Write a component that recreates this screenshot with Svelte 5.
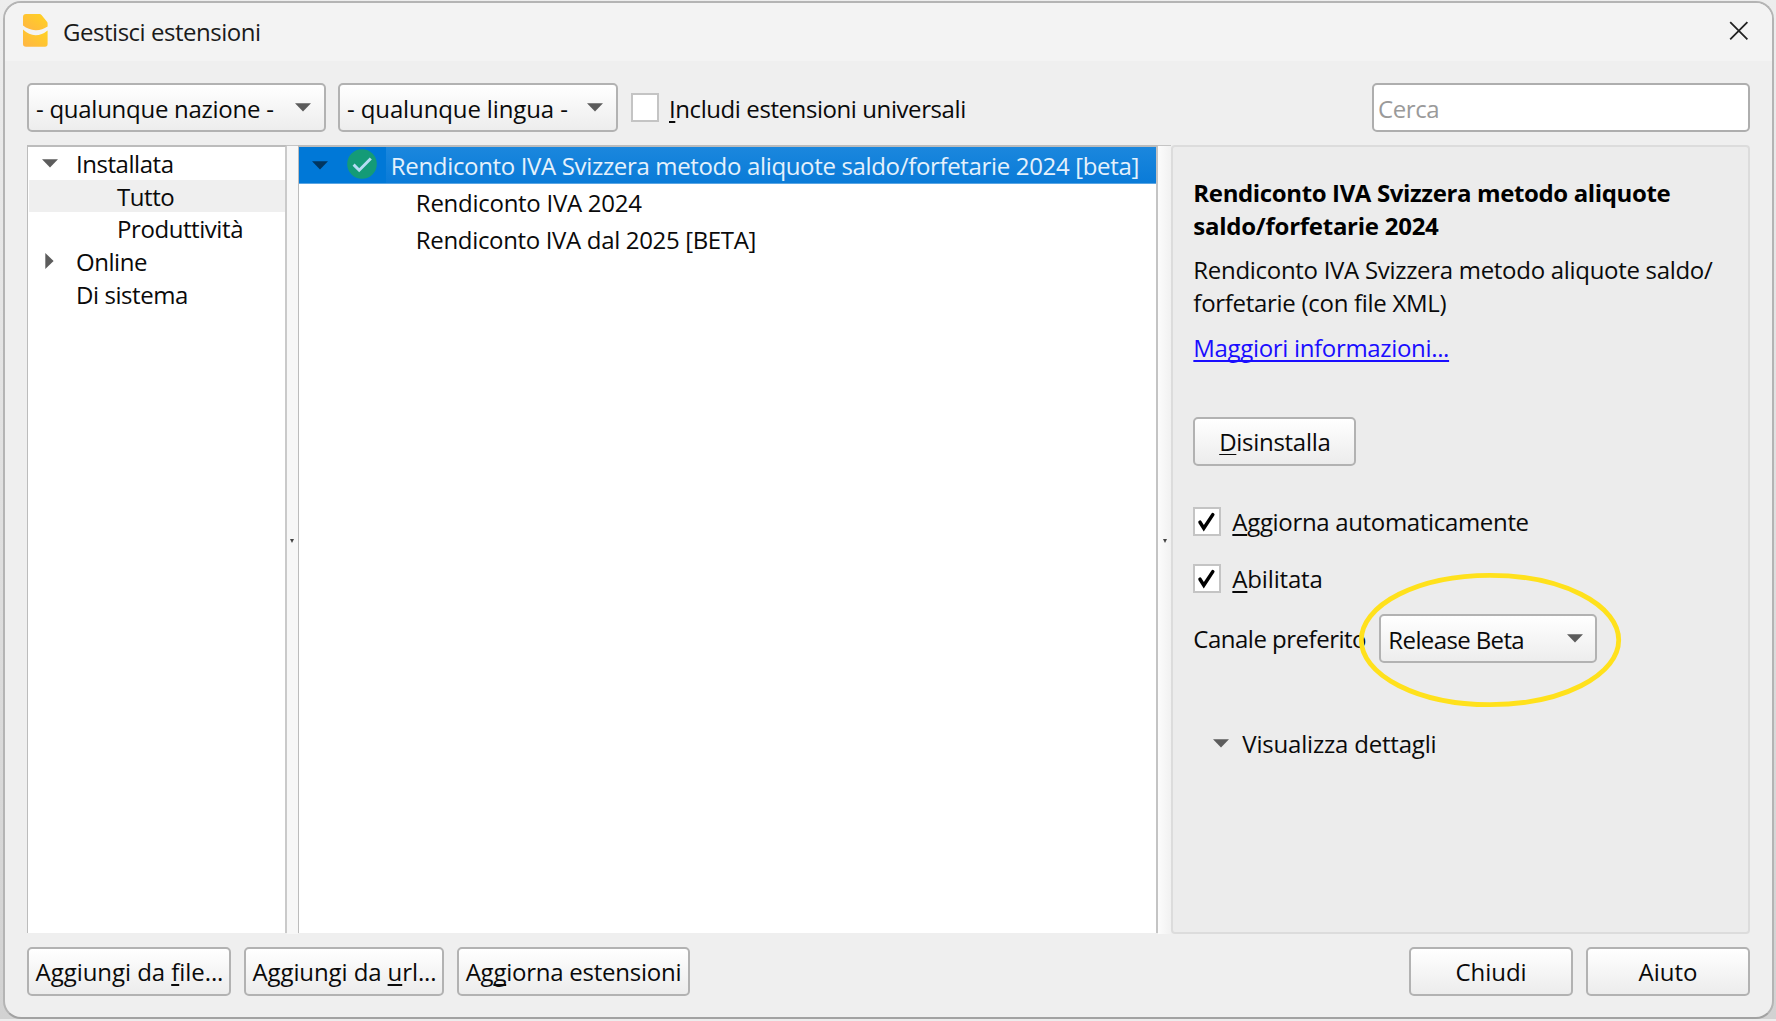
<script>
  const stores = [
    { label: 'Installata', arrow: 'down', cls: 't-inst' },
    { label: 'Tutto', child: true, active: true, cls: 't-tutto' },
    { label: 'Produttività', child: true, cls: 't-prod' },
    { label: 'Online', arrow: 'right', cls: 't-online' },
    { label: 'Di sistema', cls: 't-sist' },
  ];
</script>

{#snippet down()}
  <svg class="arrow" width="16" height="9" viewBox="0 0 16 9"><path d="M0 .3H16L8 8.6Z" /></svg>
{/snippet}

{#snippet tick()}
  <span class="box">
    <svg width="28" height="29" viewBox="0 0 28 29"><path d="M7 15.2L10.8 21.2L19.8 7.6" fill="none" stroke="#000" stroke-width="3.5" stroke-linecap="round" stroke-linejoin="miter" /></svg>
  </span>
{/snippet}

<div class="window">
  <header>
    <svg class="logo" width="25" height="33" viewBox="0 0 25 33">
      <defs>
        <linearGradient id="lg" x1="0" y1="1" x2="1" y2="0">
          <stop offset="0" stop-color="#ffb545" /><stop offset="1" stop-color="#ffd31f" />
        </linearGradient>
      </defs>
      <path fill="url(#lg)" d="M3 0H16.5Q17.6 0 18.5 .9L24 7.8Q24.6 8.6 24.6 9.6V12.6Q19 16.4 12.5 16.2Q5.5 16 0 11.6V3Q0 0 3 0Z" />
      <path fill="url(#lg)" d="M0 15.5Q6 21.2 12.5 21.2Q19 21.2 24.6 16.5V30Q24.6 32.7 22 32.7H3Q0 32.7 0 30Z" />
    </svg>
    <h1>Gestisci estensioni</h1>
    <svg class="close" width="20" height="20" viewBox="0 0 20 20"><path d="M1.2 1.2L18.4 18.4M18.4 1.2L1.2 18.4" stroke="#222" stroke-width="1.8" fill="none" /></svg>
  </header>

  <div class="toolbar">
    <div class="combo nation"><span class="t-naz">- qualunque nazione -</span>{@render down()}</div>
    <div class="combo lang"><span class="t-lin">- qualunque lingua -</span>{@render down()}</div>
    <span class="box"></span>
    <span class="t-incl"><u>I</u>ncludi estensioni universali</span>
    <input class="search" placeholder="Cerca" />
  </div>

  <main>
    <nav>
      {#each stores as s}
        <div class="node" class:child={s.child} class:active={s.active}>
          <span class="twist">
            {#if s.arrow === 'down'}{@render down()}{/if}
            {#if s.arrow === 'right'}
              <svg class="arrow" width="9" height="16" viewBox="0 0 9 16"><path d="M.3 0V16L8.6 8Z" /></svg>
            {/if}
          </span>
          <span class={s.cls}>{s.label}</span>
        </div>
      {/each}
    </nav>
    <div class="split"><i></i></div>
    <section class="list">
      <div class="selected">
        <span class="lead">
          {@render down()}
          <svg class="ok" width="30" height="30" viewBox="0 0 30 30"><circle cx="15" cy="15" r="14.8" fill="#149b77" /><path d="M6.6 15.6L12.2 21.2L23.8 9.4" fill="none" stroke="#b5dcf5" stroke-width="2.9" /></svg>
        </span>
        <span class="name t-long">Rendiconto IVA Svizzera metodo aliquote saldo/forfetarie 2024 [beta]</span>
      </div>
      <div class="sub t-2024">Rendiconto IVA 2024</div>
      <div class="sub t-2025">Rendiconto IVA dal 2025 [BETA]</div>
    </section>
    <div class="split wide"><i></i></div>
    <aside>
      <h2><span class="t-b1">Rendiconto IVA Svizzera metodo aliquote</span><br /><span class="t-b2">saldo/forfetarie 2024</span></h2>
      <p><span class="t-d1">Rendiconto IVA Svizzera metodo aliquote saldo/</span><br /><span>forfetarie (con file XML)</span></p>
      <a class="t-more" href="#info">Maggiori informazioni...</a>
      <button class="uninstall t-dis"><span><u class="thin">D</u>isinstalla</span></button>
      <div class="check">{@render tick()}<span class="t-auto"><u>A</u>ggiorna automaticamente</span></div>
      <div class="check second">{@render tick()}<span class="t-abil"><u>A</u>bilitata</span></div>
      <div class="channel">
        <span class="t-can">Canale preferito</span>
        <div class="combo release">
          <span class="t-rel">Release Beta</span>{@render down()}
          <svg class="ring" width="264" height="136" viewBox="0 0 264 136"><ellipse cx="132" cy="68" rx="128.7" ry="64.7" fill="none" stroke="#ffe11c" stroke-width="4.8" /></svg>
        </div>
      </div>
      <div class="details">{@render down()}<span class="t-vis">Visualizza dettagli</span></div>
    </aside>
  </main>

  <footer>
    <button class="w1 t-file"><span>Aggiungi da <u>f</u>ile...</span></button>
    <button class="w2 t-url"><span>Aggiungi da <u>u</u>rl...</span></button>
    <button class="w3 t-upd"><span>Ag<u>g</u>iorna estensioni</span></button>
    <button class="w4 end t-chi"><span>Chiudi</span></button>
    <button class="w4 t-aiu"><span>Aiuto</span></button>
  </footer>
</div>

<style>
  :global(body) { background: linear-gradient(#ededed, #d2d2d2); overflow: hidden; }
  * { box-sizing: border-box; }
  .window {
    width: 1771px; height: 1018px; margin: 1px 0 0 3px;
    display: flex; flex-direction: column;
    border: 2px solid #b4b4b4; border-bottom-color: #a2a2a2; border-radius: 18px;
    background: #efefef; overflow: hidden;
    font: 24px/33px "Open Sans", "Noto Sans", sans-serif;
    letter-spacing: -0.29px; color: #0a0a0a; white-space: nowrap;
  }
  header { display: flex; height: 58px; flex: none; background: #f3f3f3; padding: 11px 23px 0 18px; }
  h1 { font: inherit; margin: 1px 0 0 15px; letter-spacing: -0.47px; color: #1b1b1b; }
  .close { margin: 7px 0 0 auto; }
  .toolbar { display: flex; height: 49px; flex: none; margin: 22px 22px 0 22px; align-items: center; }
  .combo {
    height: 49px; border: 2px solid #b2b2b2; border-radius: 5px; display: flex; align-items: center;
    justify-content: space-between; background: linear-gradient(#fff, #ededed); position: relative;
  }
  .combo > span { margin-top: 1px; }
  .arrow { display: block; fill: #5c5c5c; }
  .nation { width: 299px; padding: 0 13px 0 7px; margin-right: 12px; }
  .lang { width: 280px; padding: 0 13px 0 7px; margin-right: 13px; }
  .box { width: 28px; height: 29px; flex: none; border: 2px solid #c4c4c4; background: #fff; display: block; }
  .box svg { display: block; margin: -2px; }
  .t-incl { margin: 1px 0 0 10px; letter-spacing: -0.42px; }
  u { text-decoration: underline 2px; text-underline-offset: 3px; text-decoration-skip-ink: none; }
  .thin { text-decoration-thickness: 1px; }
  .search {
    margin-left: auto; width: 378px; height: 49px; border: 2px solid #aeaeae; border-radius: 5px;
    background: #fff; font: inherit; letter-spacing: -0.4px; padding: 1px 4px 0; outline: none;
  }
  .search::placeholder { color: #9a9a9a; opacity: 1; }

  main { display: flex; height: 789px; flex: none; margin: 13px 22px 0 22px; }
  nav { width: 260px; margin-bottom: 1px; border: 1px solid #bcbcbc; border-width: 2px 2px 0 1px; border-right-color: #cacaca; background: #fff; padding-left: 1px; }
  .node { display: flex; height: 32.7px; line-height: 33px; }
  .twist { width: 47px; display: flex; align-items: center; padding-left: 13px; }
  .twist svg[width="9"] { margin-left: 3px; }
  .child .twist { width: 88px; }
  .active { background: #efefef; }
  .split { width: 11px; background: #f7f7f7; border-top: 1px solid #c4c4c4; display: flex; align-items: center; justify-content: center; padding-top: 2px; }
  .split i { border: 2.5px solid transparent; border-top: 4px solid #444; border-bottom: 0; }
  .wide { width: 13px; background: linear-gradient(90deg, #fcfcfc, #f1f1f1); }
  .list { width: 861px; margin-bottom: 1px; border: 1px solid #bcbcbc; border-width: 2px 2px 0 1px; border-right-color: #c4c4c4; background: #fff; }
  .selected { display: flex; height: 37px; background: #0078d7; border-bottom: 1px solid #5aa5e3; color: #e4f1fc; }
  .lead { width: 87px; display: flex; align-items: center; padding-left: 13px; }
  .lead .arrow { fill: #00355f; }
  .ok { margin: -3px 0 0 19px; }
  .name { flex: 1; padding-left: 5px; background: linear-gradient(#1b87dd, #0a7bd8); line-height: 37px; }
  .sub { height: 37px; padding-left: 117px; line-height: 37px; }

  aside { width: 579px; background: #ececec; border: 2px solid #dcdcdc; border-radius: 4px; padding: 29px 0 0 20px; display: flex; flex-direction: column; align-items: flex-start; }
  h2 { margin: 0 0 11px; font: inherit; font-weight: 700; color: #000; }
  p { margin: 0 0 12px; }
  a { color: #1a0dff; text-decoration: underline 2px; text-underline-offset: 3px; text-decoration-skip-ink: none; }
  button {
    height: 49px; border: 2px solid #b2b2b2; border-radius: 5px; background: linear-gradient(#fff, #ececec);
    font: inherit; letter-spacing: inherit; color: inherit; padding: 0; white-space: nowrap;
  }
  .uninstall { width: 163px; margin: 53px 0 41px; }
  .check { display: flex; gap: 11px; height: 29px; align-items: center; }
  .second { margin-top: 28px; }
  .check > span:last-child { margin-top: 0; }
  .channel { display: flex; align-items: center; margin-top: 21px; }
  .channel > span { width: 186px; }
  .release { width: 218px; padding: 0 12px 0 7px; }
  .ring { position: absolute; left: -23px; top: -44px; }
  .details { display: flex; align-items: center; gap: 13px; margin: 64px 0 0 20px; }

  footer { display: flex; margin: 13px 22px 0 22px; }
  .w1 { width: 204px; margin-right: 13px; padding-left: 1px; }
  .w2 { width: 200px; margin-right: 13px; padding-left: 1px; }
  .w3 { width: 233px; }
  .w4 { width: 164px; }
  .end { margin: 0 13px 0 auto; }

  .t-naz { letter-spacing: -0.27px; }
  .t-lin { letter-spacing: -0.12px; }
  .t-inst, .t-online { letter-spacing: -0.45px; }
  .t-tutto { letter-spacing: -0.45px; }
  .t-prod { letter-spacing: -0.43px; }
  .t-auto { letter-spacing: -0.33px; }
  .t-sist { letter-spacing: -0.42px; }
  .t-long { letter-spacing: -0.34px; }
  .t-2024 { letter-spacing: -0.27px; }
  .t-2025 { letter-spacing: -0.34px; }
  .t-b1 { letter-spacing: -0.37px; }
  .t-b2 { letter-spacing: -0.26px; }
  .t-d1 { letter-spacing: -0.3px; }
  .t-vis { letter-spacing: -0.2px; }
  .t-more { letter-spacing: -0.33px; }
  .t-abil { letter-spacing: -0.17px; }
  .t-can { letter-spacing: -0.5px; }
  .t-rel { letter-spacing: -0.62px; }
  .t-file { letter-spacing: -0.06px; }
  .t-url { letter-spacing: -0.1px; }
  .t-upd { letter-spacing: -0.24px; }
  .t-chi { letter-spacing: -0.05px; }
  .t-aiu { letter-spacing: 0; }
</style>
